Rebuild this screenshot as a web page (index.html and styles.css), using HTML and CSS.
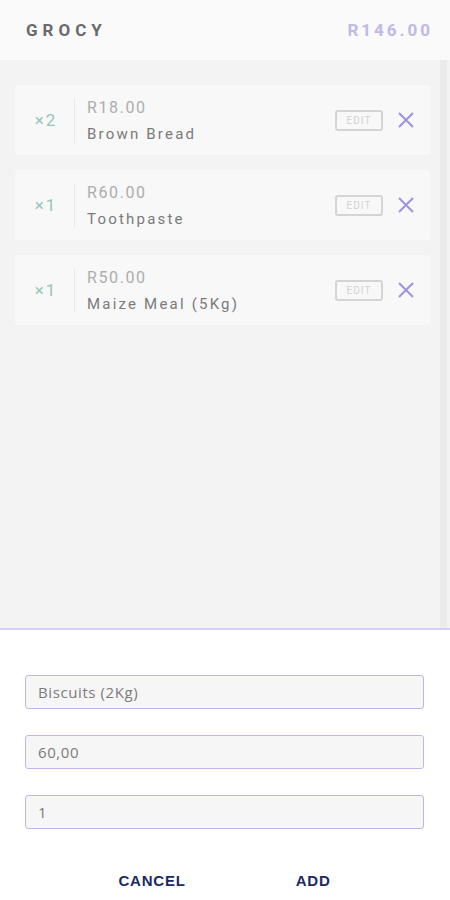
FILE: index.html
```html
<!DOCTYPE html>
<html lang="en">
<head>
    <meta charset="UTF-8">
    <meta name="viewport" content="width=device-width, initial-scale=1.0">
    <title>Grocy</title>
    <link rel="stylesheet" href="styles.css">
</head>
<body>
    <div class="app">
        <header class="top-bar">
            <span class="brand">GROCY</span>
            <span class="total">R146.00</span>
        </header>

        <main class="list">
            <div class="items">
                <div class="item">
                    <div class="qty">&times;2</div>
                    <div class="info">
                        <div class="price">R18.00</div>
                        <div class="name">Brown Bread</div>
                    </div>
                    <button class="edit-btn">EDIT</button>
                    <button class="remove-btn" aria-label="Remove">
                        <svg viewBox="0 0 18 18" width="18" height="18"><path d="M2 2L16 16M16 2L2 16" /></svg>
                    </button>
                </div>
                <div class="item">
                    <div class="qty">&times;1</div>
                    <div class="info">
                        <div class="price">R60.00</div>
                        <div class="name">Toothpaste</div>
                    </div>
                    <button class="edit-btn">EDIT</button>
                    <button class="remove-btn" aria-label="Remove">
                        <svg viewBox="0 0 18 18" width="18" height="18"><path d="M2 2L16 16M16 2L2 16" /></svg>
                    </button>
                </div>
                <div class="item">
                    <div class="qty">&times;1</div>
                    <div class="info">
                        <div class="price">R50.00</div>
                        <div class="name">Maize Meal (5Kg)</div>
                    </div>
                    <button class="edit-btn">EDIT</button>
                    <button class="remove-btn" aria-label="Remove">
                        <svg viewBox="0 0 18 18" width="18" height="18"><path d="M2 2L16 16M16 2L2 16" /></svg>
                    </button>
                </div>
            </div>
            <div class="scroll-track"></div>
        </main>

        <form class="add-form">
            <input type="text" class="field" value="Biscuits (2Kg)">
            <input type="text" class="field" value="60,00">
            <input type="text" class="field" value="1">
            <div class="actions">
                <button type="button" class="action-btn">CANCEL</button>
                <button type="button" class="action-btn">ADD</button>
            </div>
        </form>
    </div>
</body>
</html>
```

FILE: styles.css
```css
body, html {
    margin: 0;
    padding: 0;
    font-family: Roboto, "Noto Sans", sans-serif;
    background-color: #ffffff;
}
.app {
    width: 450px;
    height: 900px;
    display: flex;
    flex-direction: column;
}
.top-bar {
    height: 60px;
    display: flex;
    align-items: center;
    justify-content: space-between;
    padding: 0 20px 0 26px;
    background-color: #fafafa;
    flex-shrink: 0;
}
.brand {
    font-size: 17px;
    font-weight: 700;
    letter-spacing: 5px;
    color: #6a6a6a;
}
.total {
    font-size: 17px;
    font-weight: 700;
    letter-spacing: 3px;
    margin-right: -3px;
    color: #c0b9e6;
}
.list {
    height: 568px;
    display: flex;
    background-color: #f3f3f3;
    border-bottom: 2px solid #d2cef4;
    flex-shrink: 0;
}
.items {
    flex: 1;
    display: flex;
    flex-direction: column;
    gap: 15px;
    padding: 25px 10px 0 15px;
}
.scroll-track {
    width: 7px;
    margin-right: 3px;
    background-color: #ebebeb;
}
.item {
    height: 70px;
    display: flex;
    align-items: center;
    background-color: #f8f8f8;
    border-radius: 3px;
}
.qty {
    width: 60px;
    height: 45px;
    display: flex;
    align-items: center;
    justify-content: center;
    padding-left: 3px;
    box-sizing: border-box;
    border-right: 1px solid #e8e8e8;
    font-size: 17px;
    letter-spacing: 2px;
    color: #96c6b9;
}
.info {
    flex: 1;
    padding-left: 12px;
    display: flex;
    flex-direction: column;
    gap: 8px;
}
.price {
    font-size: 16px;
    letter-spacing: 1.6px;
    color: #adadad;
}
.name {
    font-size: 15px;
    letter-spacing: 2.2px;
    color: #7a7a7a;
}
.edit-btn {
    width: 48px;
    height: 21px;
    padding: 0;
    border: 2px solid #d4d4d4;
    border-radius: 3px;
    background: none;
    font-family: inherit;
    font-size: 10px;
    letter-spacing: 1px;
    color: #d2d2d2;
}
.remove-btn {
    margin: 0 15px 0 14px;
    padding: 0;
    border: none;
    background: none;
    display: flex;
}
.remove-btn svg path {
    stroke: #9e93dc;
    stroke-width: 2;
    fill: none;
}
.add-form {
    flex: 1;
    display: flex;
    flex-direction: column;
    gap: 26px;
    padding: 45px 26px 0 25px;
}
.field {
    height: 34px;
    box-sizing: border-box;
    margin: 0;
    padding: 0 12px;
    border: 1px solid #bcb7ee;
    border-radius: 3px;
    background-color: #f6f6f7;
    font-family: "Open Sans", Roboto, sans-serif;
    font-size: 15px;
    letter-spacing: 0.6px;
    color: #7b7b7b;
}
.actions {
    display: flex;
    justify-content: center;
    gap: 78px;
    margin-top: 9px;
}
.action-btn {
    padding: 8px 16px;
    border: none;
    background: none;
    font-family: "Liberation Sans", Arial, sans-serif;
    font-weight: 900;
    font-size: 15px;
    letter-spacing: 0.8px;
    color: #1b2a63;
}
```
